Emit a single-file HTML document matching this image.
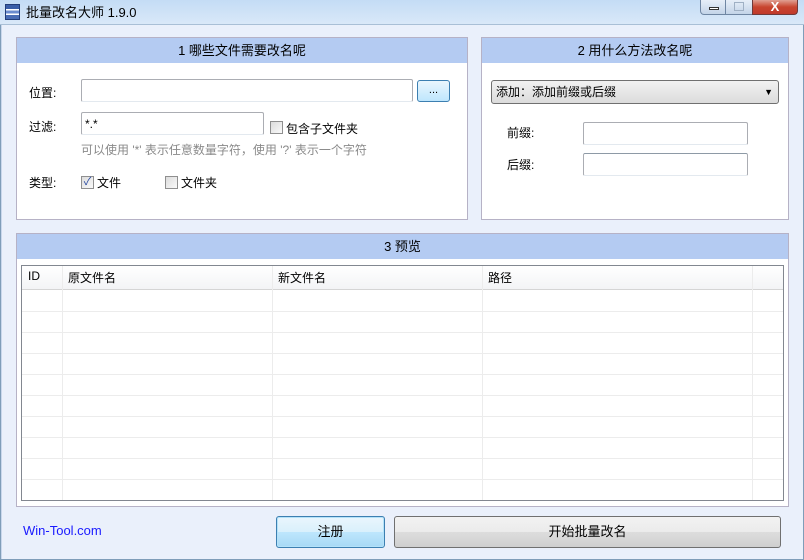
<!DOCTYPE html>
<html><head><meta charset="utf-8"><style>
*{box-sizing:border-box;margin:0;padding:0}
body{width:804px;height:560px;overflow:hidden;background:#eaf0fb;font-family:"Liberation Sans","Noto Sans CJK SC",sans-serif;font-size:12px;color:#000;position:relative}
.a{position:absolute}
.title{left:0;top:0;width:804px;height:25px;background:linear-gradient(#c4dcf5,#d9e8f8);border-bottom:1px solid #a9bfd6}
.frame{left:0;top:25px;width:804px;height:535px;border:1px solid #7f9db9;border-top:none;background:#eaf0fb;box-shadow:inset 1px 0 0 #c9d7ec}
.panel{background:#fff;border:1px solid #b6b2c6}
.hdr{left:0;top:0;right:0;height:25px;background:#b4cbf2;text-align:center;line-height:25px;font-size:13px}
.inp{background:#fff;border:1px solid #abadb3;border-radius:2px;border-bottom-color:#e3e9ef}
.cb{width:13px;height:13px;border:1px solid #8f8f8f;background:linear-gradient(135deg,#dcdcdc,#fafafa)}
.lbl{font-size:12px}
.vl{width:1px;background:#ececec}
.hl{height:1px;background:#ececec}
</style></head><body>
<div class="a title"></div>
<div class="a" style="left:5px;top:4px;width:15px;height:16px;background:linear-gradient(#3a5ea8 0 30%,#fff 30% 40%,#6b8ccf 40% 60%,#fff 60% 70%,#4a6db5 70%);border:1px solid #233e7a"></div>
<div class="a" style="left:26px;top:2px;font-size:13px">批量改名大师 1.9.0</div>
<div class="a" style="left:700px;top:0;width:26px;height:15px;border:1px solid #6f86a3;border-top:none;border-radius:0 0 0 4px;background:linear-gradient(#e6eef8,#c3d4e8)"><div class="a" style="left:8px;top:7px;width:10px;height:3px;background:#fff;border:1px solid #333"></div></div>
<div class="a" style="left:726px;top:0;width:26px;height:15px;border-bottom:1px solid #6f86a3;background:linear-gradient(#e6eef8,#c3d4e8)"><div class="a" style="left:8px;top:2px;width:10px;height:9px;border:1px solid #9fb0c4"></div></div>
<div class="a" style="left:752px;top:0;width:46px;height:15px;border:1px solid #6f3a3a;border-top:none;border-radius:0 0 4px 0;background:linear-gradient(#e0a092,#c8452f 50%,#c0392b);color:#fff;font-weight:bold;text-align:center;line-height:13px;font-size:13px">X</div>
<div class="a frame"></div>

<div class="a panel" style="left:16px;top:37px;width:452px;height:183px">
<div class="a hdr">1 哪些文件需要改名呢</div>
</div>
<div class="a lbl" style="left:29px;top:84px">位置:</div>
<div class="a inp" style="left:81px;top:79px;width:332px;height:23px"></div>
<div class="a" style="left:417px;top:80px;width:33px;height:22px;border:1px solid #3c7fb1;border-radius:3px;background:linear-gradient(#eaf6fd,#bee6fd);text-align:center;font-size:11px;line-height:18px">...</div>
<div class="a lbl" style="left:29px;top:118px">过滤:</div>
<div class="a inp" style="left:81px;top:112px;width:183px;height:23px;padding:3px 3px;line-height:16px">*.*</div>
<div class="a cb" style="left:270px;top:121px"></div>
<div class="a lbl" style="left:286px;top:120px">包含子文件夹</div>
<div class="a" style="left:81px;top:141px;color:#8a8a8a">可以使用 '*' 表示任意数量字符，使用 '?' 表示一个字符</div>
<div class="a lbl" style="left:29px;top:174px">类型:</div>
<div class="a cb" style="left:81px;top:176px;color:#2a4aa0;font-size:11px;line-height:10px;text-align:center">✓</div>
<div class="a lbl" style="left:97px;top:174px">文件</div>
<div class="a cb" style="left:165px;top:176px"></div>
<div class="a lbl" style="left:181px;top:174px">文件夹</div>

<div class="a panel" style="left:481px;top:37px;width:308px;height:183px">
<div class="a hdr">2 用什么方法改名呢</div>
</div>
<div class="a" style="left:491px;top:80px;width:288px;height:24px;border:1px solid #707070;border-radius:3px;background:linear-gradient(#f2f2f2,#dcdcdc);padding-left:4px;line-height:22px">添加：添加前缀或后缀<span class="a" style="right:5px;top:0;font-size:9px">▼</span></div>
<div class="a lbl" style="left:507px;top:124px">前缀:</div>
<div class="a inp" style="left:583px;top:122px;width:165px;height:23px"></div>
<div class="a lbl" style="left:507px;top:156px">后缀:</div>
<div class="a inp" style="left:583px;top:153px;width:165px;height:23px;border-top-color:#8e9aa6"></div>

<div class="a panel" style="left:16px;top:233px;width:773px;height:274px">
<div class="a hdr">3 预览</div>
</div>
<div class="a" style="left:21px;top:265px;width:763px;height:236px;border:1px solid #828790;background:#fff;overflow:hidden">
<div class="a" style="left:0;top:0;width:761px;height:24px;background:linear-gradient(#fff,#f3f4f6);border-bottom:1px solid #d5d5d5"></div>
<div class="a" style="left:6px;top:3px">ID</div>
<div class="a" style="left:46px;top:3px">原文件名</div>
<div class="a" style="left:256px;top:3px">新文件名</div>
<div class="a" style="left:466px;top:3px">路径</div>
<div class="a vl" style="left:40px;top:0;height:236px"></div>
<div class="a vl" style="left:250px;top:0;height:236px"></div>
<div class="a vl" style="left:460px;top:0;height:236px"></div>
<div class="a vl" style="left:730px;top:0;height:236px"></div>
<div class="a hl" style="left:0;top:45px;width:761px"></div>
<div class="a hl" style="left:0;top:66px;width:761px"></div>
<div class="a hl" style="left:0;top:87px;width:761px"></div>
<div class="a hl" style="left:0;top:108px;width:761px"></div>
<div class="a hl" style="left:0;top:129px;width:761px"></div>
<div class="a hl" style="left:0;top:150px;width:761px"></div>
<div class="a hl" style="left:0;top:171px;width:761px"></div>
<div class="a hl" style="left:0;top:192px;width:761px"></div>
<div class="a hl" style="left:0;top:213px;width:761px"></div>
</div>

<div class="a" style="left:23px;top:523px;color:#1a1aff;font-size:13px">Win-Tool.com</div>
<div class="a" style="left:276px;top:516px;width:109px;height:32px;border:1px solid #3c7fb1;border-radius:3px;background:linear-gradient(#eaf6fd,#d9f0fc 50%,#bee6fd 50%,#a7d9f5);box-shadow:inset 0 0 0 1px #b4e2f9;text-align:center;line-height:30px;font-size:13px">注册</div>
<div class="a" style="left:394px;top:516px;width:387px;height:32px;border:1px solid #707070;border-radius:3px;background:linear-gradient(#f2f2f2,#ebebeb 50%,#dddddd 50%,#cfcfcf);text-align:center;line-height:30px;font-size:13px">开始批量改名</div>
</body></html>
